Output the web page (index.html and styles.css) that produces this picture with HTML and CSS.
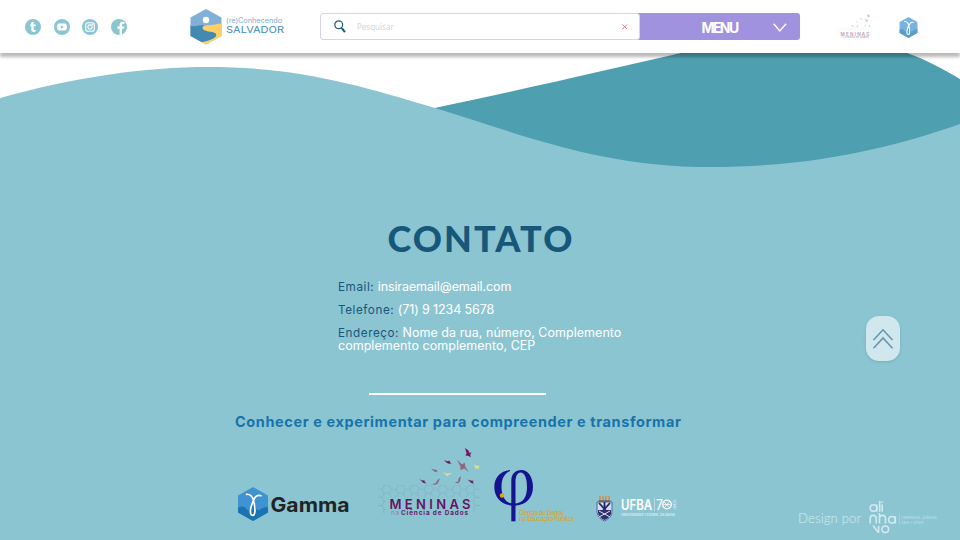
FILE: index.html
```html
<!DOCTYPE html>
<html lang="pt-BR">
<head>
<meta charset="utf-8">
<title>(re)Conhecendo Salvador - Contato</title>
<link rel="stylesheet" href="styles.css">
</head>
<body>
<header class="topbar">
  <nav class="social">
    <a class="social-link"><svg viewBox="0 0 16 16"><circle cx="8" cy="8" r="8"/><path class="cut" d="M6.400 3h2.300v2.400h2v1.900h-2v2.600c0 1 .7 1.200 1.900.8v1.800c-2.400.9-4.300.2-4.300-2.100V7.300H5.100V5.700c.8-.3 1.200-1 1.300-2.700z"/></svg></a>
    <a class="social-link"><svg viewBox="0 0 16 16"><circle cx="8" cy="8" r="8"/><rect class="cut" x="3.200" y="4.500" width="9.600" height="7" rx="2"/><path d="M6.900 6.300v3.400L9.900 8z"/></svg></a>
    <a class="social-link"><svg viewBox="0 0 16 16"><circle cx="8" cy="8" r="8"/><rect class="line" x="3.700" y="3.700" width="8.600" height="8.600" rx="2.300"/><circle class="line" cx="8" cy="8" r="2.100"/><circle class="cut" cx="10.600" cy="5.400" r=".7"/></svg></a>
    <a class="social-link"><svg viewBox="0 0 16 16"><circle cx="8" cy="8" r="8"/><path class="cut" d="M8.600 16V9.700H6.500V7.400h2.100V6.100c0-2.200 1.200-3.400 3.200-3.400h1.600v2.200h-1.200c-.9 0-1.200.4-1.200 1.200v1.300h2.300l-.4 2.300H11V16z"/></svg></a>
  </nav>
  <a class="brand">
    <svg class="brand-mark" viewBox="0 0 32 36">
      <clipPath id="hex"><path d="M16 0 31.500 8.500V27L16 35.600.500 27V8.500z"/></clipPath>
      <g clip-path="url(#hex)">
        <path fill="#82afd6" d="M0 0h32v36H0z"/>
        <path fill="#ffd066" d="M32 14.500c-5 .3-9 1.500-13 1.800-4 .2-6.500.7-6.500 3.500v16H32z"/>
        <path fill="#438ab2" d="M0 16.500c5 2 9-.8 14-.5-2 1.500-2.500 4 1 5.400 4 1.600 11.300 1 11.300 4.500S18 32 10 33.500L0 36z"/>
      </g>
      <circle cx="16" cy="11" r="3.200" fill="#fff"/>
    </svg>
    <svg class="brand-name" viewBox="0 0 60 24">
      <text x="0" y="9.200" font-size="6.900" fill="#7badd5" textLength="56" lengthAdjust="spacingAndGlyphs">(re)Conhecendo</text>
      <text x="0" y="19" font-size="9.500" fill="#438ab2" textLength="58" lengthAdjust="spacingAndGlyphs">SALVADOR</text>
    </svg>
  </a>
  <div class="search">
    <svg class="search-icon" viewBox="0 0 12 14"><circle cx="4.700" cy="4.800" r="3.900"/><path class="handle" d="m8.200 8.700 2.700 3.500"/><path d="m7 7.500 1.500 1.600"/></svg>
    <span class="placeholder">Pesquisar</span>
    <svg class="clear" viewBox="0 0 6 6"><path d="m.5.5 5 5m0-5-5 5"/></svg>
  </div>
  <div class="menu">
    <span class="menu-label">MENU</span>
    <svg class="chevron" viewBox="0 0 14 9"><path d="m.7.700 6.100 7.200L13.100.700"/></svg>
  </div>
  <svg class="mini-meninas" viewBox="0 0 110 76"><use href="#meninas"/></svg>
  <svg class="mini-gamma" viewBox="0 0 30 34"><use href="#gamma"/></svg>
</header>

<main class="contact">
  <svg class="waves" viewBox="0 0 960 487">
    <path fill="#4e9fb0" d="M430 56C530 35 610 16 681 0c60-13 170-13 226 0 20 7 36 16 53 26v100H430z"/>
    <path fill="#8cc5d2" d="M0 45C75 24 145 14 208 14c90 0 151 18 227 41 92 28 165 59 277 59 105 0 185-21 248-43v416H0z"/>
  </svg>
  <h1 class="title">CONTATO</h1>
  <section class="details">
    <p><span class="label">Email:</span> <span class="value">insiraemail@email.com</span></p>
    <p><span class="label">Telefone:</span> <span class="value">(71) 9 1234 5678</span></p>
    <p><span class="label">Endereço:</span> <span class="address">Nome da rua, número, Complemento<br>complemento complemento, CEP</span></p>
  </section>
  <hr class="rule">
  <p class="motto">Conhecer e experimentar para compreender e transformar</p>

  <footer class="logos">
    <svg class="logo-gamma" viewBox="0 0 112 34">
      <g id="gamma">
        <clipPath id="ghex"><path d="M15 0 30 8.500v17L15 34 0 25.500v-17z"/></clipPath>
        <g clip-path="url(#ghex)">
          <path fill="#4093d3" d="M0 0h30v34H0z"/>
          <path fill="#1a74b1" d="M0 21c3-2 6-2 8.500 1 2 2.300 3.500 1 5-2l2-3 3 5c2 3 4 0 6-1 2-1 4-1 5.500-1v15H0z"/>
        </g>
        <path d="M8.500 7.300c5-.5 7 4 7.800 9.700.9 6 1.200 11.300-1.700 11.300s-2.800-5-.6-11.300C16.500 10 18.500 7.200 23 8.700" fill="none" stroke="#fff" stroke-width="1.700" stroke-linecap="round"/>
      </g>
      <text class="gamma-name" x="32.500" y="24.800" textLength="79" lengthAdjust="spacingAndGlyphs">Gamma</text>
    </svg>
    <svg class="logo-meninas" viewBox="0 0 110 76">
      <defs>
        <pattern id="comb" width="14" height="8.100" patternUnits="userSpaceOnUse" x="4" y="37.200">
          <path d="M0 4.050 2.330 0H7l2.330 4.050L7 8.100H2.330zM9.330 4.050H14" fill="none" stroke="#6f9bb0" stroke-width=".6"/>
        </pattern>
      </defs>
      <g id="meninas">
        <path fill="url(#comb)" opacity=".6" d="M0 37h102v28h-7V49H8v16H0z"/>
        <g fill="#751a6b">
          <path d="M87 0c3 1.500 4 3 4.500 5l2-.7-1.200 2.200.4 3-2-1.500-3.200-.5 1-2.300z"/>
          <path d="m66 12 3 1.200 2.700-.5.5 1.800 1.500 1-3 .2-2.400-1.300zM41.500 31l2.500 1.500 2.500-.2.200 1.500 1.800 1.700-3-.5-2-1.700zM89 31.500l3.500 1 3.200.3-1 1.300 1.500 1.600-3-.8-2-1.800z"/>
        </g>
        <path fill="#8e6882" d="m79 11.500 4.500 4.800 3.500-1.300.2 3.500 3.500 5.600-4.500-3.500-3.500 1.600-.5-4zM53 20.500l3 1 3.500.5-1 1.200 1.500 1-3.500-.5zM62 30.500c-3 1-3.500 3-3.800 4.500l-4 1 2.500 1 3-1.200zM83 28.500c-3 1-2.500 3.500-2.800 5l-3.500 1 2.800 1 2.300-1.500z"/>
        <path fill="#e8dd86" d="m64.500 24 4 1.500 6-.5-3.500 1.800-1.500 1.500-2-1.700zM95.500 16.500l3 1 3.500.5-1.500 1 .5 2.500-2.800-1.500-1.500.7.500-2z"/>
        <text x="11.500" y="60.600" font-size="13" fill="#66145f" font-weight="600" textLength="81">MENINAS</text>
        <text x="13" y="67.300" font-size="6.300" fill="#8e829e" textLength="8">na</text>
        <text x="23" y="67.300" font-size="6.300" font-weight="700" fill="#652067" textLength="67">Ciência de Dados</text>
      </g>
    </svg>
    <svg class="logo-phi" viewBox="0 0 84 54">
      <path fill="#16138e" fill-rule="evenodd" d="M16 1C6 2 .3 9 .3 18c0 11 8 18.500 19.500 18.700S39 29 39 18C39 8 34 1 27.500 1 21 1 17.300 5 17.300 12v22.300C11.500 33.800 7.500 27 7.500 18c0-8.500 3-13.500 8.500-16zM21.500 34.500V13c0-6 2-9.500 5-9.500 4.500 0 6.500 6.500 6.500 14.500 0 10-4 16-11.500 16.500z"/>
      <path fill="#16138e" d="M17.300 35h4.200v17.300h-4.200z"/>
      <circle cx="8" cy="26.500" r="2.200" fill="#e8a20b"/>
      <text x="25" y="45.500" class="phi-name" textLength="45">Ciência de Dados</text>
      <text x="25" y="51.700" class="phi-name" textLength="55">na Educação Pública</text>
    </svg>
    <svg class="logo-ufba" viewBox="0 0 84 30">
      <path d="M3 9 18 9v9c0 5-3 8-7.500 10C6 26 3 23 3 18z" fill="#d4dce9" stroke="#4c6998"/>
      <path d="m5 10 11 12M16 10 5 22M10.500 9v8" stroke="#26266a" stroke-width="1.800"/>
      <path d="M4 17h13v4c-2 4-4 5-6.500 6C7 26 5 23 4 20z" fill="#303071"/>
      <path d="m5 18 11 6m-11 0 11-6" stroke="#dce5f0" stroke-width="1"/>
      <path d="M6 3v5m3-5v5m3-5v5m3-5v5" stroke="#b99d6b" stroke-width="2"/>
      <path d="M4.500 8h12" stroke="#493653"/>
      <g fill="#fff">
        <text x="27" y="16.500" font-size="14" font-weight="600" textLength="31" lengthAdjust="spacingAndGlyphs">UFBA</text>
        <path d="M60 5h.5v13H60z" opacity=".7"/>
        <text x="62" y="16.500" font-size="14" textLength="7" lengthAdjust="spacingAndGlyphs">7</text>
        <text x="27" y="22.800" font-size="3.600" font-weight="500" textLength="54" lengthAdjust="spacingAndGlyphs" opacity=".8">UNIVERSIDADE FEDERAL DA BAHIA</text>
        <text transform="translate(81.500 16.500) rotate(-90)" font-size="4" textLength="10" opacity=".7">ANOS</text>
      </g>
      <circle cx="73" cy="11.500" r="4.300" fill="none" stroke="#fff" stroke-width="1.300"/>
      <path d="m70 9 5.500 5.500m-5 0 5-6m-6 3h7" fill="none" stroke="#fff" stroke-width=".7"/>
    </svg>
    <div class="credit">
      <span class="credit-text">Design por</span>
      <svg class="alinhavo" viewBox="0 0 70 34">
        <g fill="none" stroke="#d0eaee" stroke-width="1.600">
          <circle cx="4.500" cy="7" r="3.300"/><path d="M7.800 3.500v7.300M10.700 0v10.800M13.200 3.500v7.300M13.200.200v1.600"/>
          <path d="M1.200 22.500v-5c0-4.200 6-4.200 6 0v5M10.500 12v10.500m0-5c0-4.200 6-4.200 6 0v5"/><circle cx="23" cy="18.800" r="3.300"/><path d="M26.300 15.200v7.300M4 24.500l5.300 7M9.600 31.800v-7"/><circle cx="16.300" cy="28.300" r="3.300"/>
        </g>
        <path d="M30 13h.5v11H30z" fill="#b7dfe7"/>
        <g fill="#c0e4eb" font-size="3.600"><text x="32.500" y="17.800" textLength="35" lengthAdjust="spacingAndGlyphs">EMPRESA JÚNIOR</text><text x="32.500" y="22.700" textLength="22" lengthAdjust="spacingAndGlyphs">EBA • UFBA</text></g>
      </svg>
    </div>
  </footer>
  <button class="to-top" aria-label="Voltar ao topo"><svg viewBox="0 0 20 20"><path d="M.5 11 10 .800 19.500 11M.5 19.300 10 9l9.500 10.300"/></svg></button>
</main>
</body>
</html>
```

FILE: styles.css
```css
* { box-sizing: border-box; }
body {
  margin: 0;
  width: 960px;
  height: 540px;
  overflow: hidden;
  font-family: Inter, "Open Sans", sans-serif;
  background: #fff;
}
svg { display: block; overflow: visible; flex: none; }
p { margin: 0; }

.topbar {
  position: relative;
  z-index: 2;
  display: flex;
  align-items: center;
  height: 53px;
  padding-left: 25px;
  background: #fff;
  box-shadow: 0 4px 3px rgba(0, 0, 0, .27);
}
.social { display: flex; gap: 12.600px; width: 165px; }
.social-link { width: 16px; height: 16px; }
.social-link svg { width: 16px; fill: #8cc5d2; }
.social-link .cut { fill: #fff; }
.social-link .line { fill: none; stroke: #fff; stroke-width: 1.100; }

.brand { display: flex; gap: 4px; width: 130px; }
.brand-mark { width: 32px; height: 36px; }
.brand-name { width: 60px; height: 24px; margin-top: 5px; }

.search {
  position: relative;
  z-index: 1;
  display: flex;
  align-items: center;
  width: 320px;
  height: 27px;
  padding: 0 12px 0 13px;
  border: 1px solid #d8d1f4;
  border-radius: 3px;
  background: #fff;
}
.search-icon { width: 12px; height: 14px; margin-top: 1px; fill: none; stroke: #20587b; stroke-width: 1.200; }
.search-icon .handle { stroke-width: 2.100; }
.placeholder { margin-left: 11px; color: #d5d5d5; font: 8px "Noto Sans", sans-serif; }
.clear { width: 5.500px; height: 5.500px; margin-left: auto; stroke: #f56c6c; stroke-width: 1; }

.menu {
  display: flex;
  align-items: center;
  width: 162px;
  height: 27px;
  margin-left: -2px;
  padding: 2px 13px 0 63.500px;
  border-radius: 0 3px 3px 0;
  background: #a092df;
}
.menu-label { color: #fff; font-size: 14px; font-weight: 700; letter-spacing: -1.600px; }
.chevron { width: 14px; height: 9px; margin-left: auto; margin-top: -1px; fill: none; stroke: #fff; stroke-width: 1.400; }
.mini-meninas { width: 40px; height: 27px; margin-left: 36px; margin-top: 1px; opacity: .45; }
.mini-gamma { width: 19px; height: 21px; margin-left: 23px; margin-top: 1px; opacity: .7; }

.contact { position: relative; height: 487px; padding-top: 164px; }
.waves { position: absolute; inset: 0; z-index: -1; width: 960px; height: 487px; }
.title {
  margin: 0;
  padding-left: 387.500px;
  color: #175779;
  font: 900 36px/42px Lato, sans-serif;
  letter-spacing: 2.100px;
}
.details {
  display: grid;
  gap: 10px;
  margin: 21px 0 0 338px;
  color: #fff;
  font-size: 12.500px;
  line-height: 13px;
  white-space: nowrap;
}
.label { color: #175779; font-size: 11.700px; line-height: 0; letter-spacing: .56px; }
.value { letter-spacing: -.1px; }
.address { letter-spacing: .03px; }
.rule { width: 177px; height: 2px; margin: 41px 0 0 369.400px; border: 0; background: #fff; }
.motto {
  margin: 17px 0 0 235px;
  color: #1873ab;
  font-size: 14.500px;
  font-weight: 700;
  line-height: 20px;
  letter-spacing: .6px;
  white-space: nowrap;
}

.logos { display: flex; align-items: flex-start; padding-left: 238px; margin-top: 15.500px; }
.logo-gamma { width: 112px; height: 34px; margin-top: 39px; }
.gamma-name { font-size: 20px; font-weight: 700; fill: #222423; }
.logo-meninas { width: 110px; height: 76px; margin-left: 28px; }
.logo-phi { width: 84px; height: 54px; margin: 21px 0 0 6px; }
.phi-name { font: 500 6.300px "Noto Sans", sans-serif; fill: #d4a637; }
.logo-ufba { width: 84px; height: 30px; margin: 45px 0 0 16px; }
.credit { display: flex; margin: 53px 0 0 120px; }
.credit-text { width: 71px; padding-top: 9px; color: #d4edf1; font: 300 13px/16px Lato, sans-serif; letter-spacing: .2px; white-space: nowrap; }
.alinhavo { width: 70px; height: 34px; }

.to-top {
  position: absolute;
  left: 866px;
  top: 263px;
  display: grid;
  place-items: center;
  width: 34px;
  height: 45px;
  padding: 0;
  border: 0;
  border-radius: 13px;
  background: #cfe7ed;
  box-shadow: 0 1px 3px rgba(60, 120, 140, .3);
}
.to-top svg { width: 20px; height: 20px; fill: none; stroke: #6497ad; stroke-width: 1.600; }
```
